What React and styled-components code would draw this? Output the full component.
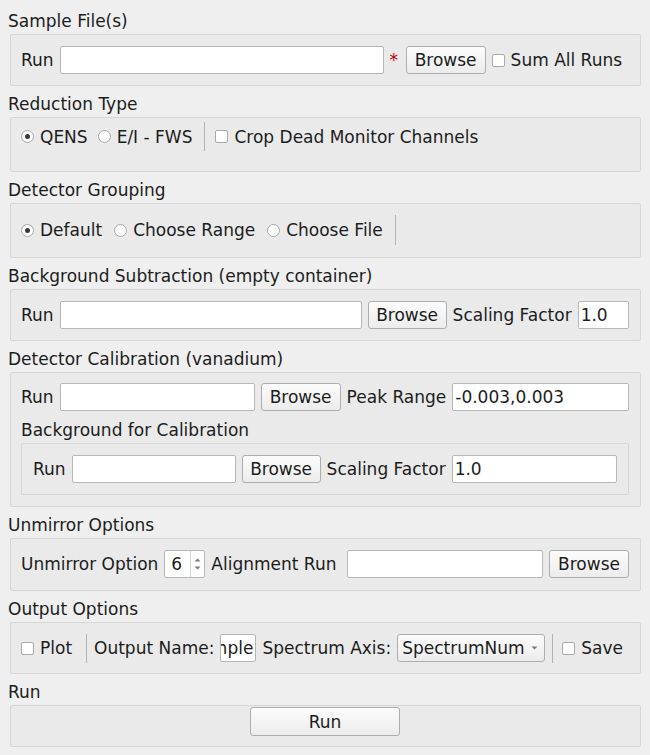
import React from 'react';
import styled, { createGlobalStyle } from 'styled-components';

const Global = createGlobalStyle`
  html, body { margin: 0; padding: 0; background: #efefef; }
  body {
    font-family: "DejaVu Sans", "Liberation Sans", sans-serif;
    font-size: 17px;
    color: #1c1c1c;
  }
  * { box-sizing: border-box; }
`;

const Page = styled.div`
  width: 650px;
  height: 755px;
  padding: 11px 9px 0 10px;
  display: flex;
  flex-direction: column;
  gap: 8px;
  overflow: hidden;
`;

const Section = styled.section`
  display: flex;
  flex-direction: column;
`;

const Title = styled.div`
  line-height: 20px;
  height: 20px;
  margin: 0 0 3px -2px;
  white-space: nowrap;
`;

const SubTitle = styled(Title)`
  margin: 9px 0 3px 0;
`;

const Box = styled.div`
  border: 1px solid #d6d6d6;
  border-radius: 2px;
  background: #eaeaea;
  padding: ${(p) => p.$pad || '11px 11px 11px 10px'};
  display: flex;
  flex-direction: column;
`;

const Row = styled.div`
  display: flex;
  align-items: center;
  justify-content: ${(p) => (p.$center ? 'center' : 'flex-start')};
  gap: ${(p) => (p.$gap ?? 6)}px;
  height: ${(p) => (p.$h ?? 28)}px;
`;

const Label = styled.span`
  flex: none;
  white-space: nowrap;
  line-height: 20px;
  margin-right: ${(p) => p.$mr ?? 0}px;
`;

const Asterisk = styled.span`
  flex: none;
  width: 10px;
  color: #c80000;
  line-height: 20px;
`;

const Input = styled.input`
  flex: ${(p) => (p.$w ? 'none' : '1 1 0')};
  width: ${(p) => (p.$w ? `${p.$w}px` : 'auto')};
  min-width: 0;
  height: 28px;
  margin: 0;
  padding: 0 2px;
  font: inherit;
  color: inherit;
  background: #fff;
  border: 1px solid #b7b7b7;
  border-radius: 2px;
  outline: none;
`;

const ClippedField = styled.div`
  flex: none;
  width: ${(p) => p.$w}px;
  height: 28px;
  display: flex;
  align-items: center;
  justify-content: flex-end;
  padding-right: 2px;
  overflow: hidden;
  white-space: nowrap;
  background: #fff;
  border: 1px solid #b7b7b7;
  border-radius: 2px;
`;

const Button = styled.button`
  flex: none;
  width: ${(p) => p.$w}px;
  height: ${(p) => p.$h ?? 28}px;
  margin: 0;
  padding: 0;
  font: inherit;
  color: inherit;
  border: 1px solid #adadad;
  border-radius: 3px;
  background: linear-gradient(#fcfcfc, #ececec);
`;

const Option = styled.label`
  display: inline-flex;
  align-items: center;
  gap: 6px;
  flex: none;
  white-space: nowrap;
  line-height: 20px;
`;

const CheckMark = styled.span`
  flex: none;
  width: 13px;
  height: 13px;
  background: #fff;
  border: 1px solid #a9a9a9;
  border-radius: 2px;
`;

const RadioMark = styled.span`
  flex: none;
  width: 13px;
  height: 13px;
  background: #fff;
  border: 1px solid #a9a9a9;
  border-radius: 50%;
  display: flex;
  align-items: center;
  justify-content: center;
  &::after {
    content: '';
    display: ${(p) => (p.$on ? 'block' : 'none')};
    width: 5px;
    height: 5px;
    border-radius: 50%;
    background: #3a3a3a;
  }
`;

const Sep = styled.span`
  flex: none;
  width: 1px;
  height: ${(p) => p.$h}px;
  background: #b3b3b3;
  margin: 0 ${(p) => p.$r ?? 0}px 0 ${(p) => p.$l ?? 0}px;
`;

const Spin = styled.div`
  flex: none;
  display: flex;
  width: 41px;
  height: 28px;
  background: #fff;
  border: 1px solid #b7b7b7;
  border-radius: 2px;
`;

const SpinValue = styled.span`
  flex: 1;
  display: flex;
  align-items: center;
  padding-left: 6px;
`;

const SpinArrows = styled.span`
  width: 14px;
  border-left: 1px solid #d2d2d2;
  display: flex;
  flex-direction: column;
  align-items: center;
  justify-content: center;
  gap: 4px;
`;

const Combo = styled.div`
  flex: none;
  width: 148px;
  height: 28px;
  display: flex;
  align-items: center;
  justify-content: space-between;
  padding: 0 6px 0 4px;
  border: 1px solid #adadad;
  border-radius: 3px;
  background: linear-gradient(#fcfcfc, #ececec);
  white-space: nowrap;
`;

const Tri = ({ down }) => (
  <svg width="7" height="4" viewBox="0 0 7 4">
    <path d={down ? 'M0.5 0.5 L6.5 0.5 L3.5 3.5 Z' : 'M0.5 3.5 L6.5 3.5 L3.5 0.5 Z'} fill="#7a7a7a" />
  </svg>
);

const Check = ({ children }) => (
  <Option>
    <CheckMark />
    {children}
  </Option>
);

const Radio = ({ on, children }) => (
  <Option>
    <RadioMark $on={on} />
    {children}
  </Option>
);

export default function App() {
  return (
    <>
      <Global />
      <Page>
        <Section>
          <Title>Sample File(s)</Title>
          <Box>
            <Row>
              <Label>Run</Label>
              <Input $w={324} readOnly value="" />
              <Asterisk>*</Asterisk>
              <Button $w={80}>Browse</Button>
              <Check>Sum All Runs</Check>
            </Row>
          </Box>
        </Section>

        <Section>
          <Title>Reduction Type</Title>
          <Box $pad="4px 11px 20px 10px">
            <Row $h={29} $gap={10}>
              <Radio on>QENS</Radio>
              <Radio>E/I - FWS</Radio>
              <Sep $h={29} $l={2} />
              <Check>Crop Dead Monitor Channels</Check>
            </Row>
          </Box>
        </Section>

        <Section>
          <Title>Detector Grouping</Title>
          <Box $pad="11px 11px 12px 10px">
            <Row $h={30} $gap={12}>
              <Radio on>Default</Radio>
              <Radio>Choose Range</Radio>
              <Radio>Choose File</Radio>
              <Sep $h={30} />
            </Row>
          </Box>
        </Section>

        <Section>
          <Title>Background Subtraction (empty container)</Title>
          <Box>
            <Row>
              <Label>Run</Label>
              <Input $w={302} readOnly value="" />
              <Button $w={79}>Browse</Button>
              <Label>Scaling Factor</Label>
              <Input readOnly value="1.0" />
            </Row>
          </Box>
        </Section>

        <Section>
          <Title>Detector Calibration (vanadium)</Title>
          <Box $pad="10px 11px 11px 10px">
            <Row>
              <Label>Run</Label>
              <Input $w={195} readOnly value="" />
              <Button $w={80}>Browse</Button>
              <Label>Peak Range</Label>
              <Input readOnly value="-0.003,0.003" />
            </Row>
            <SubTitle>Background for Calibration</SubTitle>
            <Box $pad="11px 11px 11px 11px">
              <Row>
                <Label>Run</Label>
                <Input $w={164} readOnly value="" />
                <Button $w={79}>Browse</Button>
                <Label>Scaling Factor</Label>
                <Input readOnly value="1.0" />
              </Row>
            </Box>
          </Box>
        </Section>

        <Section>
          <Title>Unmirror Options</Title>
          <Box $pad="11px 11px 12px 10px">
            <Row>
              <Label>Unmirror Option</Label>
              <Spin>
                <SpinValue>6</SpinValue>
                <SpinArrows>
                  <Tri />
                  <Tri down />
                </SpinArrows>
              </Spin>
              <Label $mr={5}>Alignment Run</Label>
              <Input readOnly value="" />
              <Button $w={80}>Browse</Button>
            </Row>
          </Box>
        </Section>

        <Section>
          <Title>Output Options</Title>
          <Box>
            <Row>
              <Check>Plot</Check>
              <Sep $h={29} $l={8} $r={1} />
              <Label>Output Name:</Label>
              <ClippedField $w={36}>Sample</ClippedField>
              <Label>Spectrum Axis:</Label>
              <Combo>
                <span>SpectrumNum</span>
                <Tri down />
              </Combo>
              <Sep $h={29} $l={1} $r={3} />
              <Check>Save</Check>
            </Row>
          </Box>
        </Section>

        <Section>
          <Title>Run</Title>
          <Box $pad="1px 11px 10px 10px">
            <Row $center $h={29}>
              <Button $w={150} $h={29}>Run</Button>
            </Row>
          </Box>
        </Section>
      </Page>
    </>
  );
}
